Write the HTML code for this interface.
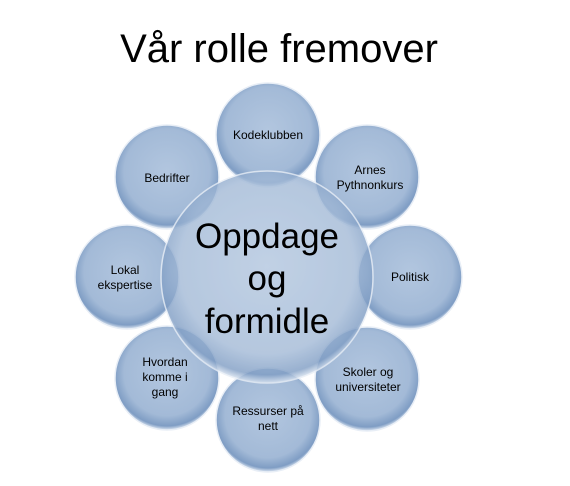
<!DOCTYPE html>
<html><head><style>
body{margin:0;width:570px;height:486px;background:#fff;overflow:hidden}
svg{display:block}
</style></head><body>
<svg width="570" height="486" viewBox="0 0 570 486" font-family="Liberation Sans, sans-serif">
<defs>
<radialGradient id="g" cx="50%" cy="45%" r="55%">
<stop offset="0" stop-color="#b2c6df"/>
<stop offset="0.75" stop-color="#a3bad7"/>
<stop offset="0.93" stop-color="#7f9dc4"/>
<stop offset="1" stop-color="#dfe8f3"/>
</radialGradient>
</defs>
<text x="279" y="62" font-size="40" text-anchor="middle" fill="#000">Vår rolle fremover</text>
<g stroke="#e8eef6" stroke-width="1.5" fill="url(#g)">
<circle cx="268" cy="135" r="52"/>
<circle cx="367" cy="177" r="52"/>
<circle cx="410" cy="277" r="52"/>
<circle cx="367" cy="379" r="52"/>
<circle cx="268" cy="420" r="52"/>
<circle cx="167" cy="378" r="52"/>
<circle cx="127" cy="277" r="52"/>
<circle cx="167" cy="177" r="52"/>
<circle cx="267" cy="277" r="106" opacity="0.8"/>
</g>
<g font-size="12" text-anchor="middle" fill="#000">
<text x="268" y="139">Kodeklubben</text>
<text x="370" y="174">Arnes</text><text x="370" y="189">Pythnonkurs</text>
<text x="410" y="281">Politisk</text>
<text x="368" y="376">Skoler og</text><text x="368" y="391">universiteter</text>
<text x="268" y="415">Ressurser på</text><text x="268" y="430">nett</text>
<text x="165" y="366">Hvordan</text><text x="165" y="381">komme i</text><text x="165" y="396">gang</text>
<text x="125" y="274">Lokal</text><text x="125" y="289">ekspertise</text>
<text x="167" y="182">Bedrifter</text>
</g>
<g font-size="35" text-anchor="middle" fill="#000">
<text x="267" y="248">Oppdage</text>
<text x="267" y="290">og</text>
<text x="267" y="333">formidle</text>
</g>
</svg>
</body></html>
